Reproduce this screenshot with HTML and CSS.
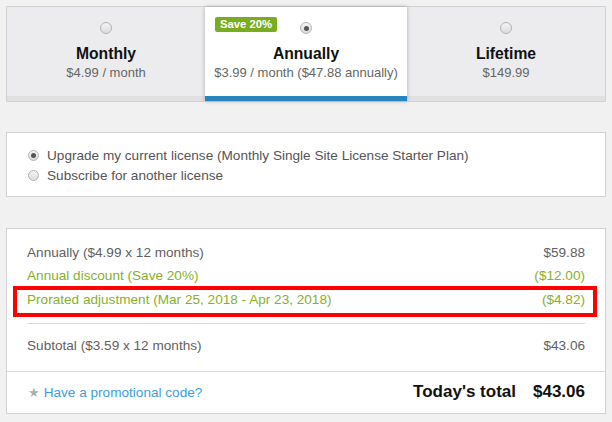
FILE: index.html
```html
<!DOCTYPE html>
<html>
<head>
<meta charset="utf-8">
<link rel="stylesheet" href="styles.css">
</head>
<body>
  <div class="plans">
    <div class="plan">
      <span class="radio"></span>
      <div class="plan-title">Monthly</div>
      <div class="plan-price">$4.99 / month</div>
    </div>
    <div class="plan selected">
      <span class="badge">Save 20%</span>
      <span class="radio checked"></span>
      <div class="plan-title">Annually</div>
      <div class="plan-price">$3.99 / month ($47.88 annually)</div>
    </div>
    <div class="plan">
      <span class="radio"></span>
      <div class="plan-title">Lifetime</div>
      <div class="plan-price">$149.99</div>
    </div>
  </div>

  <div class="license">
    <label class="option"><span class="radio small checked"></span>Upgrade my current license (Monthly Single Site License Starter Plan)</label>
    <label class="option"><span class="radio small"></span>Subscribe for another license</label>
  </div>

  <div class="summary">
    <div class="summary-body">
      <div class="line"><span>Annually ($4.99 x 12 months)</span><span>$59.88</span></div>
      <div class="line green"><span>Annual discount (Save 20%)</span><span>($12.00)</span></div>
      <div class="line green prorated"><span>Prorated adjustment (Mar 25, 2018 - Apr 23, 2018)</span><span>($4.82)</span><span class="highlight"></span></div>
      <div class="rule"></div>
      <div class="line"><span>Subtotal ($3.59 x 12 months)</span><span>$43.06</span></div>
    </div>
    <div class="summary-foot">
      <div class="promo"><span class="star">★</span><a class="promo-link" href="#">Have a promotional code?</a></div>
      <div class="total"><span>Today's total</span><span>$43.06</span></div>
    </div>
  </div>
</body>
</html>
```

FILE: styles.css
```css
html, body {
  margin: 0;
  padding: 0;
}
body {
  background: #f1f1f1;
  padding: 6px 6px 0 6px;
  font-family: "Liberation Sans", Arial, sans-serif;
  color: #555;
}

.plans {
  display: grid;
  grid-template-columns: 1fr 202px 1fr;
  border: 1px solid #d2d2d2;
  background: #ececee;
}
.plan {
  position: relative;
  height: 94px;
  box-sizing: border-box;
  border-bottom: 5px solid #e1e1e3;
  padding-top: 15px;
  text-align: center;
}
.plan.selected {
  background: #fff;
  border-bottom-color: #2784bf;
  box-shadow: 0 0 4px rgba(0, 0, 0, 0.28);
  z-index: 1;
}
.radio {
  display: inline-block;
  width: 12px;
  height: 12px;
  box-sizing: border-box;
  border-radius: 50%;
  border: 1px solid #b4b4b4;
  background: linear-gradient(#f4f4f4, #dcdcdc);
  position: relative;
  vertical-align: top;
}
.radio.checked::after {
  content: "";
  position: absolute;
  left: 2.5px;
  top: 2.5px;
  width: 5px;
  height: 5px;
  border-radius: 50%;
  background: #555;
}
.plan .radio {
  display: block;
  margin: 0 auto;
}
.plan-title {
  margin-top: 10px;
  font-size: 15.7px;
  font-weight: bold;
  line-height: 20px;
  color: #111;
}
.plan-price {
  margin-top: 1px;
  font-size: 13px;
  line-height: 16px;
  color: #666;
}
.badge {
  position: absolute;
  left: 10px;
  top: 10px;
  background: #79ad1f;
  color: #fff;
  font-size: 11.3px;
  font-weight: bold;
  line-height: 15px;
  padding: 0 5px;
  border-radius: 2px;
}

.license {
  margin-top: 30px;
  background: #fff;
  border: 1px solid #d3d3d3;
  padding: 12px 20px 11px 21px;
  font-size: 13.6px;
  color: #555;
}
.option {
  display: flex;
  align-items: center;
  gap: 8px;
  height: 20px;
}
.radio.small {
  width: 11px;
  height: 11px;
}
.radio.small.checked::after {
  left: 2px;
  top: 2px;
  width: 5px;
  height: 5px;
}

.summary {
  margin-top: 31px;
  background: #fff;
  border: 1px solid #d3d3d3;
  font-size: 13.6px;
}
.summary-body {
  padding: 13px 20px 14px 20px;
}
.line {
  display: flex;
  justify-content: space-between;
  line-height: 22px;
  color: #5f5f5f;
}
.line.green {
  color: #87b02d;
}
.line.green:nth-child(2) {
  margin-top: 1px;
}
.prorated {
  position: relative;
  margin-top: 2px;
}
.highlight {
  position: absolute;
  left: -14px;
  right: -12px;
  top: -3px;
  height: 31px;
  box-sizing: border-box;
  border: 4px solid #ff0000;
}
.rule {
  margin-top: 12px;
  height: 1px;
  background: #dcdcdc;
  margin-bottom: 11px;
}
.summary-foot {
  border-top: 1px solid #dcdcdc;
  padding: 10px 20px 11px 21px;
  display: flex;
  justify-content: space-between;
  align-items: center;
  height: 20px;
}
.promo {
  display: flex;
  align-items: center;
  gap: 4px;
}
.star {
  color: #adadad;
  font-family: "DejaVu Sans", sans-serif;
  font-size: 13px;
}
.promo-link {
  color: #3d9ddb;
  text-decoration: none;
}
.total {
  display: flex;
  gap: 17px;
  font-size: 17px;
  font-weight: bold;
  color: #111;
}
```
